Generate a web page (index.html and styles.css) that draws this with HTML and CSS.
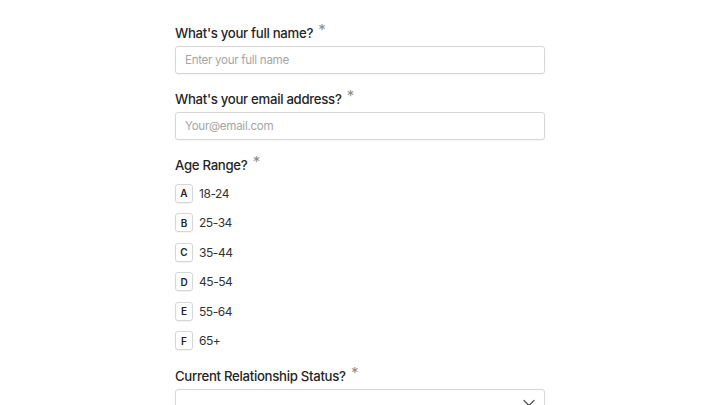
FILE: index.html
```html
<!DOCTYPE html>
<html>
<head>
<meta charset="utf-8">
<link rel="stylesheet" href="styles.css">
</head>
<body>
<form class="form">
  <div class="field">
    <label class="label">What's your full name? <span class="req">*</span></label>
    <input class="input" type="text" placeholder="Enter your full name">
  </div>
  <div class="field">
    <label class="label">What's your email address? <span class="req">*</span></label>
    <input class="input" type="text" placeholder="Your@email.com">
  </div>
  <div class="field">
    <label class="label">Age Range? <span class="req">*</span></label>
    <div class="options">
      <div class="option"><span class="key">A</span><span class="opt-text">18-24</span></div>
      <div class="option"><span class="key">B</span><span class="opt-text">25-34</span></div>
      <div class="option"><span class="key">C</span><span class="opt-text">35-44</span></div>
      <div class="option"><span class="key">D</span><span class="opt-text">45-54</span></div>
      <div class="option"><span class="key">E</span><span class="opt-text">55-64</span></div>
      <div class="option"><span class="key">F</span><span class="opt-text">65+</span></div>
    </div>
  </div>
  <div class="field">
    <label class="label">Current Relationship Status? <span class="req">*</span></label>
    <div class="select">
      <svg class="chevron" width="12" height="8" viewBox="0 0 12 8"><path d="M1 1.5l5 5 5-5" fill="none" stroke="#555" stroke-width="1.3" stroke-linecap="round" stroke-linejoin="round"/></svg>
    </div>
  </div>
</form>
</body>
</html>
```
FILE: styles.css
```css
html, body {
  margin: 0;
  padding: 0;
  background: #ffffff;
}
body {
  font-family: Inter, "Liberation Sans", sans-serif;
  color: #262626;
}
.form {
  width: 370px;
  margin: 0 auto;
  padding-top: 23px;
  display: flex;
  flex-direction: column;
  gap: 15px;
}
.field {
  display: flex;
  flex-direction: column;
  gap: 3px;
}
.label {
  font-size: 13.2px;
  font-weight: 500;
  letter-spacing: -0.3px;
  line-height: 20px;
  height: 20px;
  color: #262626;
}
.req {
  color: #8c8c8c;
  font-size: 15px;
  font-weight: 400;
  position: relative;
  top: -3px;
  margin-left: 2px;
}
.input {
  box-sizing: border-box;
  height: 28px;
  width: 100%;
  margin: 0;
  border: 1px solid #d6d6d6;
  border-radius: 3px;
  padding: 0 9px;
  font-family: Inter, "Liberation Sans", sans-serif;
  font-size: 11.6px;
  letter-spacing: -0.3px;
  color: #262626;
  outline: none;
  box-shadow: 0 1px 1px rgba(0,0,0,0.04);
}
.input::placeholder {
  color: #a6a6a6;
}
.options {
  display: flex;
  flex-direction: column;
  gap: 9.6px;
  padding-top: 5px;
}
.option {
  display: flex;
  align-items: center;
  height: 20px;
  gap: 6px;
}
.key {
  box-sizing: border-box;
  width: 18px;
  height: 19px;
  border: 1px solid #d6d6d6;
  border-radius: 3px;
  display: flex;
  align-items: center;
  justify-content: center;
  font-size: 10px;
  font-weight: 600;
  color: #262626;
  box-shadow: 0 1px 1px rgba(0,0,0,0.05);
}
.opt-text {
  font-size: 12px;
  letter-spacing: -0.45px;
  color: #333333;
}
.select {
  box-sizing: border-box;
  height: 28px;
  border: 1px solid #d6d6d6;
  border-radius: 3px;
  display: flex;
  align-items: center;
  justify-content: flex-end;
  padding-right: 9px;
}
.chevron {
  display: block;
}
```
